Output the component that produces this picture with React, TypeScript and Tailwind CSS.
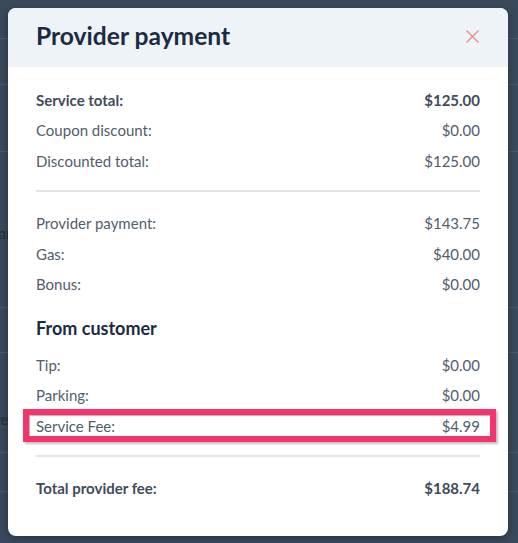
import React from "react";

const font = { fontFamily: "Lato, 'Open Sans', sans-serif" };

function Row({ label, value, bold = false }: { label: string; value: string; bold?: boolean }) {
  return (
    <div className="flex h-[30.5px] items-center justify-between">
      <span className={bold ? "font-bold text-[#414c5a]" : "text-[#525d6b]"}>{label}</span>
      <span className={bold ? "font-bold text-[#414c5a]" : "text-[#525d6b]"}>{value}</span>
    </div>
  );
}

export default function App() {
  return (
    <div className="relative h-[543px] w-[518px] overflow-hidden bg-[#3a4a5c]" style={font}>
      {/* background page */}
      <div className="flex flex-col text-[15px] text-[#25303d]">
        <div className="h-[39px] border-b border-[#4a5a6c]" />
        <div className="h-[46px] border-b border-[#4a5a6c]" />
        <div className="h-[67px] border-b border-[#4a5a6c]" />
        <div className="flex h-[156px] items-center border-b border-[#4a5a6c] pt-[8px] -ml-[14px]">
          <span>Plan,</span>
        </div>
        <div className="h-[45px] border-b border-[#4a5a6c]" />
        <div className="flex h-[100px] items-center border-b border-[#4a5a6c] pt-[34px] -ml-[12px]">
          <span>are</span>
        </div>
        <div className="h-[39px] border-b border-[#4a5a6c]" />
      </div>

      {/* modal */}
      <div className="absolute left-[8px] top-[8px] w-[500px] overflow-hidden rounded-[8px] bg-white shadow-[0_2px_8px_rgba(0,0,0,0.35)]">
        <div className="flex h-[59px] items-center justify-between bg-[#eef3f8] pl-[28px] pr-[29px]">
          <h2 className="mt-[-3px] text-[24.6px] font-bold leading-none text-[#1b2b42]">Provider payment</h2>
          <svg width="13" height="13" viewBox="0 0 13 13" className="mt-[-2px]">
            <path d="M0.5 0.5 L12.5 12.5 M12.5 0.5 L0.5 12.5" stroke="#f08a8a" strokeWidth="1.4" fill="none" />
          </svg>
        </div>
        <div className="px-[28px] pb-[32px] pt-[17.75px] text-[15px]">
          <Row label="Service total:" value="$125.00" bold />
          <Row label="Coupon discount:" value="$0.00" />
          <Row label="Discounted total:" value="$125.00" />
          <div className="mt-[14px] h-[2px] bg-[#e3e5e9]" />
          <div className="mt-[15.75px]">
            <Row label="Provider payment:" value="$143.75" />
            <Row label="Gas:" value="$40.00" />
            <Row label="Bonus:" value="$0.00" />
          </div>
          <h3 className="mt-[16.5px] h-[24px] text-[18px] font-bold leading-[24px] text-[#1b2b42]">From customer</h3>
          <div className="mt-[9.75px]">
            <Row label="Tip:" value="$0.00" />
            <Row label="Parking:" value="$0.00" />
            <div className="relative">
              <Row label="Service Fee:" value="$4.99" />
              <div className="pointer-events-none absolute -left-[13px] -right-[16px] -top-[2px] -bottom-[1px] border-[6px] border-[#f5336c] shadow-[inset_1px_1px_1px_rgba(0,0,0,0.3),2px_2px_2px_rgba(0,0,0,0.25)]" />
            </div>
          </div>
          <div className="mt-[13.75px] h-[2px] bg-[#e3e5e9]" />
          <div className="mt-[16px]">
            <Row label="Total provider fee:" value="$188.74" bold />
          </div>
        </div>
      </div>
    </div>
  );
}
